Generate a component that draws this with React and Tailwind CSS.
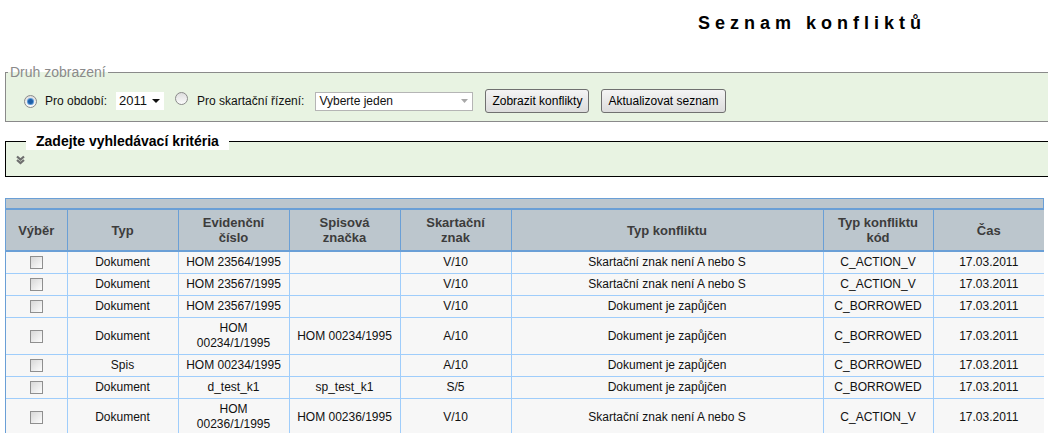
import React from 'react';

const rows = [
  { typ: 'Dokument', ev: 'HOM 23564/1995', sp: '', sk: 'V/10', konf: 'Skartační znak není A nebo S', kod: 'C_ACTION_V', cas: '17.03.2011' },
  { typ: 'Dokument', ev: 'HOM 23567/1995', sp: '', sk: 'V/10', konf: 'Skartační znak není A nebo S', kod: 'C_ACTION_V', cas: '17.03.2011' },
  { typ: 'Dokument', ev: 'HOM 23567/1995', sp: '', sk: 'V/10', konf: 'Dokument je zapůjčen', kod: 'C_BORROWED', cas: '17.03.2011' },
  { typ: 'Dokument', ev: 'HOM 00234/1/1995', sp: 'HOM 00234/1995', sk: 'A/10', konf: 'Dokument je zapůjčen', kod: 'C_BORROWED', cas: '17.03.2011' },
  { typ: 'Spis', ev: 'HOM 00234/1995', sp: '', sk: 'A/10', konf: 'Dokument je zapůjčen', kod: 'C_BORROWED', cas: '17.03.2011' },
  { typ: 'Dokument', ev: 'd_test_k1', sp: 'sp_test_k1', sk: 'S/5', konf: 'Dokument je zapůjčen', kod: 'C_BORROWED', cas: '17.03.2011' },
  { typ: 'Dokument', ev: 'HOM 00236/1/1995', sp: 'HOM 00236/1995', sk: 'V/10', konf: 'Skartační znak není A nebo S', kod: 'C_ACTION_V', cas: '17.03.2011' },
];

function Radio({ checked }) {
  return (
    <span className="inline-flex h-[13px] w-[13px] items-center justify-center rounded-full border border-[#8a8a8a] bg-gradient-to-b from-[#dedede] to-[#fbfbfb]">
      {checked && <span className="h-[5px] w-[5px] rounded-full bg-[#1e5fa8] shadow-[0_0_0_1px_#5b9ad8]" />}
    </span>
  );
}

function Checkbox() {
  return (
    <span className="inline-block h-[13px] w-[13px] border border-[#8f8f8f] bg-gradient-to-br from-[#d8d8d8] to-[#fdfdfd] align-middle" />
  );
}

function Button({ children }) {
  return (
    <button className="h-[24px] rounded-[3px] border border-[#707070] bg-gradient-to-b from-[#f4f4f4] to-[#dcdcdc] px-[6px] text-[12px] text-black">
      {children}
    </button>
  );
}

export default function App() {
  const th = 'border-x border-[#6a9fd6] px-1 py-[5px] text-center align-middle font-bold leading-[15px] text-[#3c3c3c]';
  const td = 'border border-[#9fcdfb] px-1 py-[3px] text-center align-middle leading-[15px]';

  return (
    <div className="min-h-screen w-[1048px] overflow-hidden bg-white font-['Liberation_Sans',Arial,sans-serif] text-[12px] text-[#111]">
      {/* Title */}
      <div className="h-[64px] pt-[12px]">
        <h1 className="ml-[698px] text-[18px] font-bold leading-[22px] tracking-[5px] text-black">Seznam konfliktů</h1>
      </div>

      {/* Druh zobrazeni */}
      <fieldset className="ml-[5px] w-[1060px] border border-[#8a8a8a] bg-[#e8f3e2] pb-[8px] pl-[18px]">
        <legend className="ml-[-16px] px-[2px] text-[14px] leading-[16px] text-[#8a8a8a]">Druh zobrazení</legend>
        <div className="mt-[9px] flex h-[24px] items-center">
          <Radio checked />
          <span className="ml-[8px]">Pro období:</span>
          <span className="ml-[9px] inline-flex h-[18px] w-[48px] items-center bg-white pl-[3px] text-[13px]">
            2011
            <svg width="8" height="5" viewBox="0 0 8 5" className="ml-[5px]"><path d="M0 0h8L4 4z" fill="#111" /></svg>
          </span>
          <span className="ml-[11px]"><Radio /></span>
          <span className="ml-[9px]">Pro skartační řízení:</span>
          <span className="ml-[11px] inline-flex h-[19px] w-[158px] items-center justify-between border border-[#b5b5b5] bg-white pl-[3px] pr-[4px] text-[12px]">
            Vyberte jeden
            <svg width="7" height="4" viewBox="0 0 7 4"><path d="M0 0h7L3.5 4z" fill="#a8a8a8" /></svg>
          </span>
          <span className="ml-[12px]"><Button>Zobrazit konflikty</Button></span>
          <span className="ml-[12px]"><Button>Aktualizovat seznam</Button></span>
        </div>
      </fieldset>

      {/* Vyhledavaci kriteria */}
      <fieldset className="ml-[5px] mt-[11px] h-[44px] w-[1060px] border border-black bg-[#e8f3e2] pl-[10px]">
        <legend className="ml-[10px] bg-white px-[10px] text-[14px] font-bold leading-[17px] text-black">Zadejte vyhledávací kritéria</legend>
        <div className="mt-[4px] flex h-[12px] items-center">
          <svg width="9" height="10" viewBox="0 0 9 10">
            <path d="M1 1.5l3.5 3 3.5-3M1 5l3.5 3 3.5-3" fill="none" stroke="#6e6e6e" strokeWidth="2.2" />
          </svg>
        </div>
      </fieldset>

      {/* Table */}
      <div className="ml-[5px] mt-[21px] w-[1039px] border-x border-t border-[#6a9fd6]">
        <div className="h-[11px] border-b-2 border-[#6a9fd6] bg-[#bcc6cd]" />
        <table className="w-full table-fixed border-collapse">
          <colgroup>
            <col className="w-[61px]" />
            <col className="w-[111px]" />
            <col className="w-[111px]" />
            <col className="w-[111px]" />
            <col className="w-[111px]" />
            <col className="w-[312px]" />
            <col className="w-[110px]" />
            <col className="w-[111px]" />
          </colgroup>
          <thead>
            <tr className="h-[41px] border-b-2 border-[#6a9fd6] bg-[#bcc6cd] text-[13px]">
              <th className={th + ' border-l-0'}>Výběr</th>
              <th className={th}>Typ</th>
              <th className={th}>Evidenční<br />číslo</th>
              <th className={th}>Spisová<br />značka</th>
              <th className={th}>Skartační<br />znak</th>
              <th className={th}>Typ konfliktu</th>
              <th className={th}>Typ konfliktu<br />kód</th>
              <th className={th + ' border-r-0'}>Čas</th>
            </tr>
          </thead>
          <tbody className="bg-[#f7f7f7]">
            {rows.map((r, i) => (
              <tr key={i}>
                <td className={td + ' border-l-0'}><Checkbox /></td>
                <td className={td}>{r.typ}</td>
                <td className={td}>{r.ev.startsWith('HOM') && r.ev.split('/').length > 2 ? (<>{r.ev.split(' ')[0]}<br />{r.ev.split(' ')[1]}</>) : r.ev}</td>
                <td className={td}>{r.sp}</td>
                <td className={td}>{r.sk}</td>
                <td className={td}>{r.konf}</td>
                <td className={td}>{r.kod}</td>
                <td className={td + ' border-r-0'}>{r.cas}</td>
              </tr>
            ))}
          </tbody>
        </table>
      </div>
    </div>
  );
}
